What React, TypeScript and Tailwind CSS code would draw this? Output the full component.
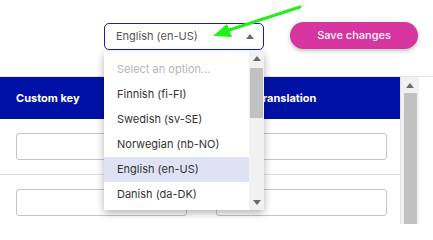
import React from 'react'

const options = [
  'Finnish (fi-FI)',
  'Swedish (sv-SE)',
  'Norwegian (nb-NO)',
  'English (en-US)',
  'Danish (da-DK)',
]

function Caret({ up = true }: { up?: boolean }) {
  return (
    <svg width="8" height="5" viewBox="0 0 8 5" className="block">
      <path d={up ? 'M0 5 L4 0 L8 5 Z' : 'M0 0 L4 5 L8 0 Z'} fill="#6b6b6b" />
    </svg>
  )
}

function LanguageDropdown() {
  return (
    <div className="absolute left-[104px] top-[51px] w-[160px] h-[159px] bg-white shadow-[0_3px_8px_rgba(0,0,0,0.3)] flex">
      <ul className="flex-1 pt-[6px]">
        <li className="h-[25px] flex items-center pl-[13px] text-[#b5b5b5]">
          Select an option...
        </li>
        {options.map((o) => (
          <li
            key={o}
            className={`h-[25px] flex items-center pl-[13px] text-[#333] ${
              o === 'English (en-US)' ? 'bg-[#dfe2f2]' : ''
            }`}
          >
            {o}
          </li>
        ))}
      </ul>
      {/* scrollbar */}
      <div className="w-[15px] bg-[#f1f1f1] flex flex-col items-center">
        <div className="h-[15px] flex items-center justify-center">
          <Caret />
        </div>
        <div className="w-[13px] h-[50px] mt-[2px] bg-[#c1c1c1]" />
        <div className="flex-1" />
        <div className="h-[15px] flex items-center justify-center">
          <Caret up={false} />
        </div>
      </div>
    </div>
  )
}

export default function App() {
  return (
    <div
      className="relative w-[433px] h-[224px] overflow-hidden bg-white text-[11px]"
      style={{ fontFamily: 'Inter, "Noto Sans", sans-serif' }}
    >
      {/* Top bar */}
      <div className="h-[76px] pt-[22px] pr-[15px] flex justify-end items-start gap-[26px]">
        <div className="mt-[1px] w-[160px] h-[27px] border border-[#1a1f9c] rounded-[5px] flex items-center justify-between pl-[11px] pr-[9px] text-[#555]">
          <span>English (en-US)</span>
          <Caret />
        </div>
        <button className="w-[128px] h-[27px] rounded-full bg-[#d6349e] text-white font-medium shadow-[0_2px_4px_rgba(0,0,0,0.25)]">
          Save changes
        </button>
      </div>

      {/* Table */}
      <div className="flex border-t border-[#e6e6e6]">
        <div className="w-[401px] border-r border-[#e3e3e3]">
          <div className="h-[42px] bg-[#0011a6] text-white font-bold flex items-center">
            <div className="w-[240px] pl-4">Custom key</div>
            <div className="pl-4">Translation</div>
          </div>
          {[0, 1].map((r) => (
            <div
              key={r}
              className="grid grid-cols-2 h-[56px] items-center border-b border-[#dddddd]"
            >
              <div className="pl-4 pr-[13px]">
                <div className="h-[27px] border border-[#c4c4c4] rounded-[3px]" />
              </div>
              <div className="pl-4 pr-[13px]">
                <div className="h-[27px] border border-[#c4c4c4] rounded-[3px]" />
              </div>
            </div>
          ))}
        </div>
        {/* page scrollbar */}
        <div className="w-[18px] h-[150px] bg-[#f1f1f1] flex flex-col items-center">
          <div className="h-[16px] flex items-center justify-center">
            <Caret />
          </div>
          <div className="w-[13px] flex-1 bg-[#c1c1c1]" />
        </div>
      </div>

      <LanguageDropdown />

      {/* green arrow annotation */}
      <svg
        className="absolute left-0 top-0 pointer-events-none"
        width="433"
        height="224"
        viewBox="0 0 433 224"
      >
        <line x1="300" y1="7" x2="226" y2="31" stroke="#22f01a" strokeWidth="3" strokeLinecap="round" />
        <path d="M213 36 L227 24 L232 37 Z" fill="#22f01a" />
      </svg>
    </div>
  )
}
